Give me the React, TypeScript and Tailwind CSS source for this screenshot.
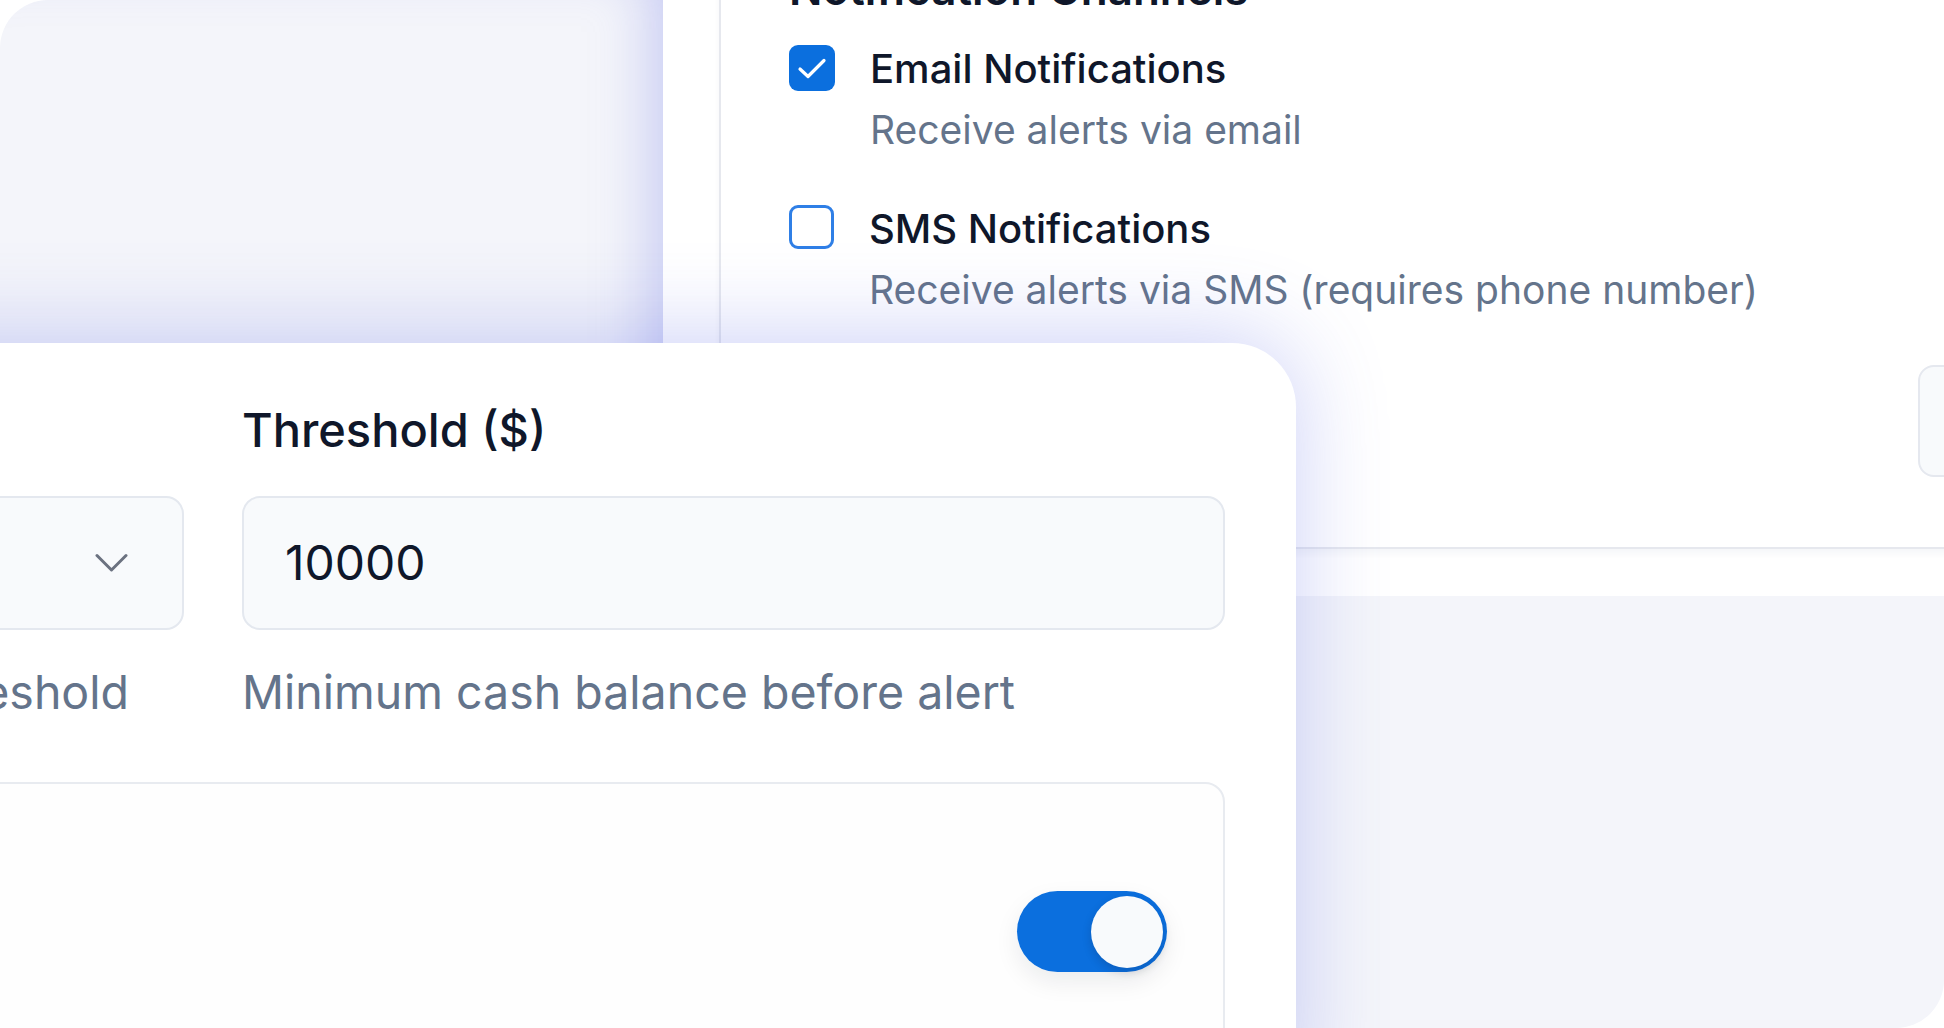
import React from "react";

function CheckedBox() {
  return (
    <div className="w-[46px] h-[46px] shrink-0 rounded-[9px] bg-[#0b6fde] flex items-center justify-center">
      <svg width="46" height="46" viewBox="0 0 46 46" fill="none">
        <path d="M11 24 L19 31.5 L35 15.5" stroke="white" strokeWidth="3.2" strokeLinecap="round" strokeLinejoin="round" />
      </svg>
    </div>
  );
}

function EmptyBox() {
  return <div className="w-[45px] h-[44px] shrink-0 rounded-[9px] bg-white border-[3px] border-[#2f7fe6]" />;
}

function Channel({ checked, title, sub }: { checked: boolean; title: string; sub: string }) {
  return (
    <div className="flex items-start gap-[35px]">
      <div className="pt-[1px]">{checked ? <CheckedBox /> : <EmptyBox />}</div>
      <div className="flex flex-col">
        <div className="text-[40px] leading-[50px] font-medium text-[#0f172a] whitespace-nowrap">{title}</div>
        <div className="mt-[11px] text-[39px] leading-[50px] text-[#64748b] whitespace-nowrap">{sub}</div>
      </div>
    </div>
  );
}

export default function App() {
  return (
    <div className="relative w-[1944px] h-[1028px] overflow-hidden bg-white font-['Inter',sans-serif]">
      {/* back-left panel */}
      <div className="absolute left-0 top-0 w-[663px] h-[600px] rounded-tl-[48px] bg-[#f4f5fa] shadow-[inset_-50px_0_60px_-40px_rgba(110,118,230,0.35)]" />

      {/* bottom-right panel */}
      <div className="absolute left-[1150px] top-[596px] right-0 bottom-0 rounded-br-[48px] bg-[#f4f5fa]" />

      {/* top-right card: notification channels */}
      <div className="absolute left-[719px] top-[-60px] w-[1471px] bg-white border-2 border-[#e6e8ee] shadow-[0_5px_6px_rgba(30,40,90,0.04)] flex flex-col pt-[26px] pl-[68px] pr-[70px] pb-[70px]">
        <div className="text-[44px] leading-[42px] font-semibold text-[#0f172a] whitespace-nowrap">Notification Channels</div>
        <div className="mt-[34px] flex flex-col gap-[49px]">
          <Channel checked title="Email Notifications" sub="Receive alerts via email" />
          <Channel checked={false} title="SMS Notifications" sub="Receive alerts via SMS (requires phone number)" />
        </div>
        <div className="mt-[50px] flex justify-end">
          <div className="w-[200px] h-[112px] rounded-[16px] bg-[#f8fafc] border-2 border-[#e5e8ef] flex items-center px-[30px] text-[38px] text-[#0f172a]">Save</div>
        </div>
      </div>

      {/* front card */}
      <div className="absolute left-[-460px] top-[343px] w-[1756px] h-[760px] bg-white rounded-tr-[64px] shadow-[0_-6px_90px_rgba(85,98,230,0.30)] pt-[59px] pl-[60px] pr-[71px]">
        <div className="grid grid-cols-[584px_983px] gap-x-[58px]">
          <div className="text-[47px] leading-[56px] font-medium text-[#0f172a] whitespace-nowrap">Alert</div>
          <div className="text-[47px] leading-[56px] font-medium text-[#0f172a] whitespace-nowrap">Threshold ($)</div>

          <div className="mt-[38px] h-[134px] rounded-[18px] bg-[#f8fafc] border-2 border-[#e4e8ef] flex items-center justify-end pr-[54px]">
            <svg width="33" height="20" viewBox="0 0 33 20" fill="none">
              <path d="M2 2.5 L16.5 17 L31 2.5" stroke="#6b7280" strokeWidth="3" strokeLinecap="round" strokeLinejoin="round" />
            </svg>
          </div>
          <div className="mt-[38px] h-[134px] rounded-[18px] bg-[#f8fafc] border-2 border-[#e4e8ef] flex items-center pl-[41px] text-[48px] text-[#0f172a]">
            10000
          </div>

          <div className="mt-[34px] flex justify-end pr-[55px] text-[46.5px] leading-[56px] text-[#64748b] whitespace-nowrap">Alert when below threshold</div>
          <div className="mt-[34px] text-[46.5px] leading-[56px] text-[#64748b] whitespace-nowrap">Minimum cash balance before alert</div>

          <div className="col-span-2 mt-[62px] h-[400px] rounded-tr-[20px] border-2 border-[#e8ebf0] bg-[#fefefe] flex items-start justify-between pt-[107px] pr-[56px] pl-[40px]">
            <div className="text-[46px] text-[#0f172a]">Enable</div>
            <div className="w-[150px] h-[81px] rounded-full bg-[#0b6fde] flex items-center justify-end pr-[4px] shadow-[0_10px_24px_rgba(15,23,42,0.08)]">
              <div className="w-[72px] h-[72px] rounded-full bg-[#f8fafc] shadow-[0_4px_10px_rgba(15,23,42,0.18)]" />
            </div>
          </div>
        </div>
      </div>
    </div>
  );
}
